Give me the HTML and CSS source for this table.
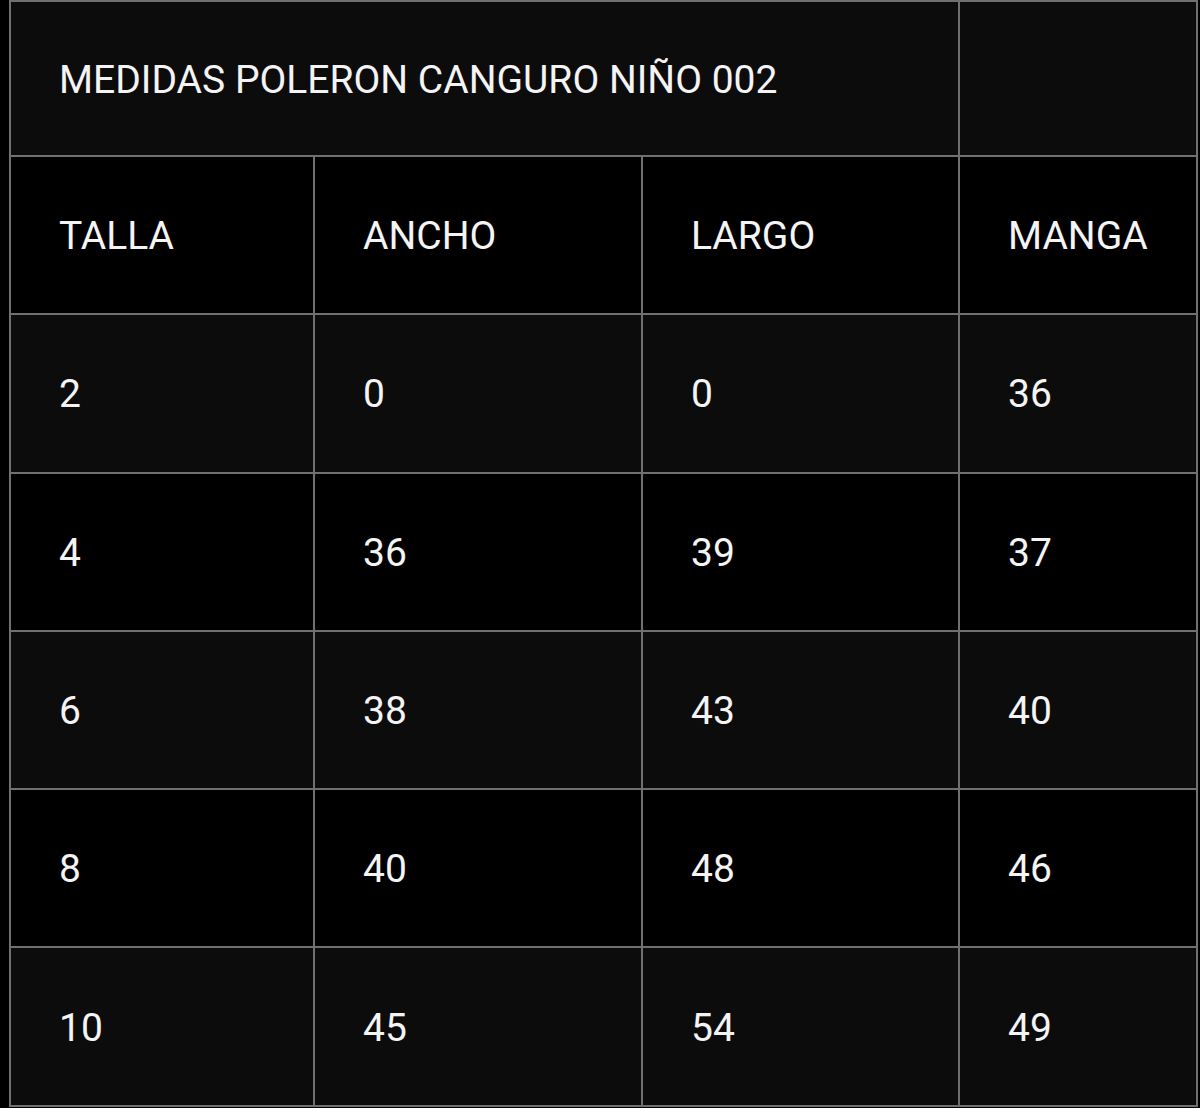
FILE: index.html
```html
<!DOCTYPE html>
<html lang="es">
<head>
<meta charset="utf-8">
<title>Medidas Poleron Canguro Niño 002</title>
<link rel="stylesheet" href="styles.css">
</head>
<body>
<table class="sizes">
  <colgroup>
    <col class="c1"><col class="c2"><col class="c3"><col class="c4">
  </colgroup>
  <tbody>
    <tr class="row title-row alt"><td colspan="3">MEDIDAS POLERON CANGURO NIÑO 002</td><td></td></tr>
    <tr class="row"><td>TALLA</td><td>ANCHO</td><td>LARGO</td><td>MANGA</td></tr>
    <tr class="row alt"><td>2</td><td>0</td><td>0</td><td>36</td></tr>
    <tr class="row"><td>4</td><td>36</td><td>39</td><td>37</td></tr>
    <tr class="row alt"><td>6</td><td>38</td><td>43</td><td>40</td></tr>
    <tr class="row"><td>8</td><td>40</td><td>48</td><td>46</td></tr>
    <tr class="row alt"><td>10</td><td>45</td><td>54</td><td>49</td></tr>
  </tbody>
</table>
</body>
</html>
```
FILE: styles.css
```css
html, body {
  margin: 0;
  padding: 0;
  background: #000;
}
body {
  overflow: hidden;
}
.sizes {
  border-collapse: collapse;
  table-layout: fixed;
  width: 1189px;
  margin-left: 9px;
  font-family: Roboto, "Liberation Sans", sans-serif;
  font-size: 39px;
  font-weight: 400;
  color: #f4f4f4;
}
.c1 { width: 304px; }
.c2 { width: 328px; }
.c3 { width: 317px; }
.c4 { width: 238px; }
.sizes td {
  border: 2px solid #707070;
  padding: 3px 0 0 48px;
  height: 158.3px;
  box-sizing: border-box;
  vertical-align: middle;
  background: #000;
  white-space: nowrap;
  line-height: 1;
}
.sizes .alt td {
  background: #0c0c0c;
}
.sizes .title-row td {
  height: 155px;
}
```
